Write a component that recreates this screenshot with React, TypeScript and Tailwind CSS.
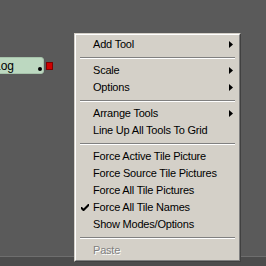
import React from "react";

const Arrow = () => (
  <svg width="4" height="7" viewBox="0 0 4 7" className="absolute right-[5px] top-[5px]">
    <path d="M0 0 L4 3.5 L0 7 Z" fill="#000" />
  </svg>
);

const Item = ({ label, sub, checked, disabled }: { label: string; sub?: boolean; checked?: boolean; disabled?: boolean }) => (
  <div className="relative h-[17px] flex items-center pl-[16px]">
    {checked && (
      <svg width="8" height="8" viewBox="0 0 8 8" className="absolute left-[4px] top-[5px]">
        <path d="M0 3 L0 5 L2 7 L3 7 L8 2 L8 0 L7 0 L2.5 4.5 L1 3 Z" fill="#000" />
      </svg>
    )}
    <span
      className={
        disabled
          ? "text-[#808080] [text-shadow:1px_1px_0_#ffffff]"
          : "text-black"
      }
    >
      {label}
    </span>
    {sub && <Arrow />}
  </div>
);

const Sep = () => (
  <div className="h-[9px] flex flex-col justify-center px-[3px]">
    <div className="h-px bg-[#808080]" />
    <div className="h-px bg-white" />
  </div>
);

export default function App() {
  return (
    <div
      className="relative w-[266px] h-[266px] overflow-hidden bg-[#5a5a5a]"
      style={{ fontFamily: "'Liberation Sans', Arial, sans-serif" }}
    >
      {/* bottom strip */}
      <div className="absolute left-0 right-0 top-[256px] h-px bg-[#6e6e6e]" />
      <div className="absolute left-0 right-0 top-[257px] bottom-0 bg-[#4c4c4c]" />

      {/* node */}
      <div className="absolute left-[-30px] top-[57px] w-[74px] h-[17px] bg-[#bcd8c0] rounded-r-[3px] border border-[#a6c2aa] flex items-center pl-[23px] text-[12px] text-black">
        Log
      </div>
      <div className="absolute left-[38px] top-[67px] w-[4px] h-[4px] rounded-full bg-black" />
      <div className="absolute left-[46px] top-[62px] w-[7px] h-[8px] bg-[#d00000] border border-[#800000]" />

      {/* menu */}
      <div className="absolute left-[74px] top-[33px] w-[167px] h-[229px] bg-[#d4d0c8] border border-t-[#d4d0c8] border-l-[#d4d0c8] border-r-[#404040] border-b-[#404040] text-[11px] tracking-[-0.2px] leading-none">
        <div className="h-full border border-t-white border-l-white border-r-[#808080] border-b-[#808080] py-[1px] px-[1px]">
          <Item label="Add Tool" sub />
          <Sep />
          <Item label="Scale" sub />
          <Item label="Options" sub />
          <Sep />
          <Item label="Arrange Tools" sub />
          <Item label="Line Up All Tools To Grid" />
          <Sep />
          <Item label="Force Active Tile Picture" />
          <Item label="Force Source Tile Pictures" />
          <Item label="Force All Tile Pictures" />
          <Item label="Force All Tile Names" checked />
          <Item label="Show Modes/Options" />
          <Sep />
          <Item label="Paste" disabled />
        </div>
      </div>
    </div>
  );
}
